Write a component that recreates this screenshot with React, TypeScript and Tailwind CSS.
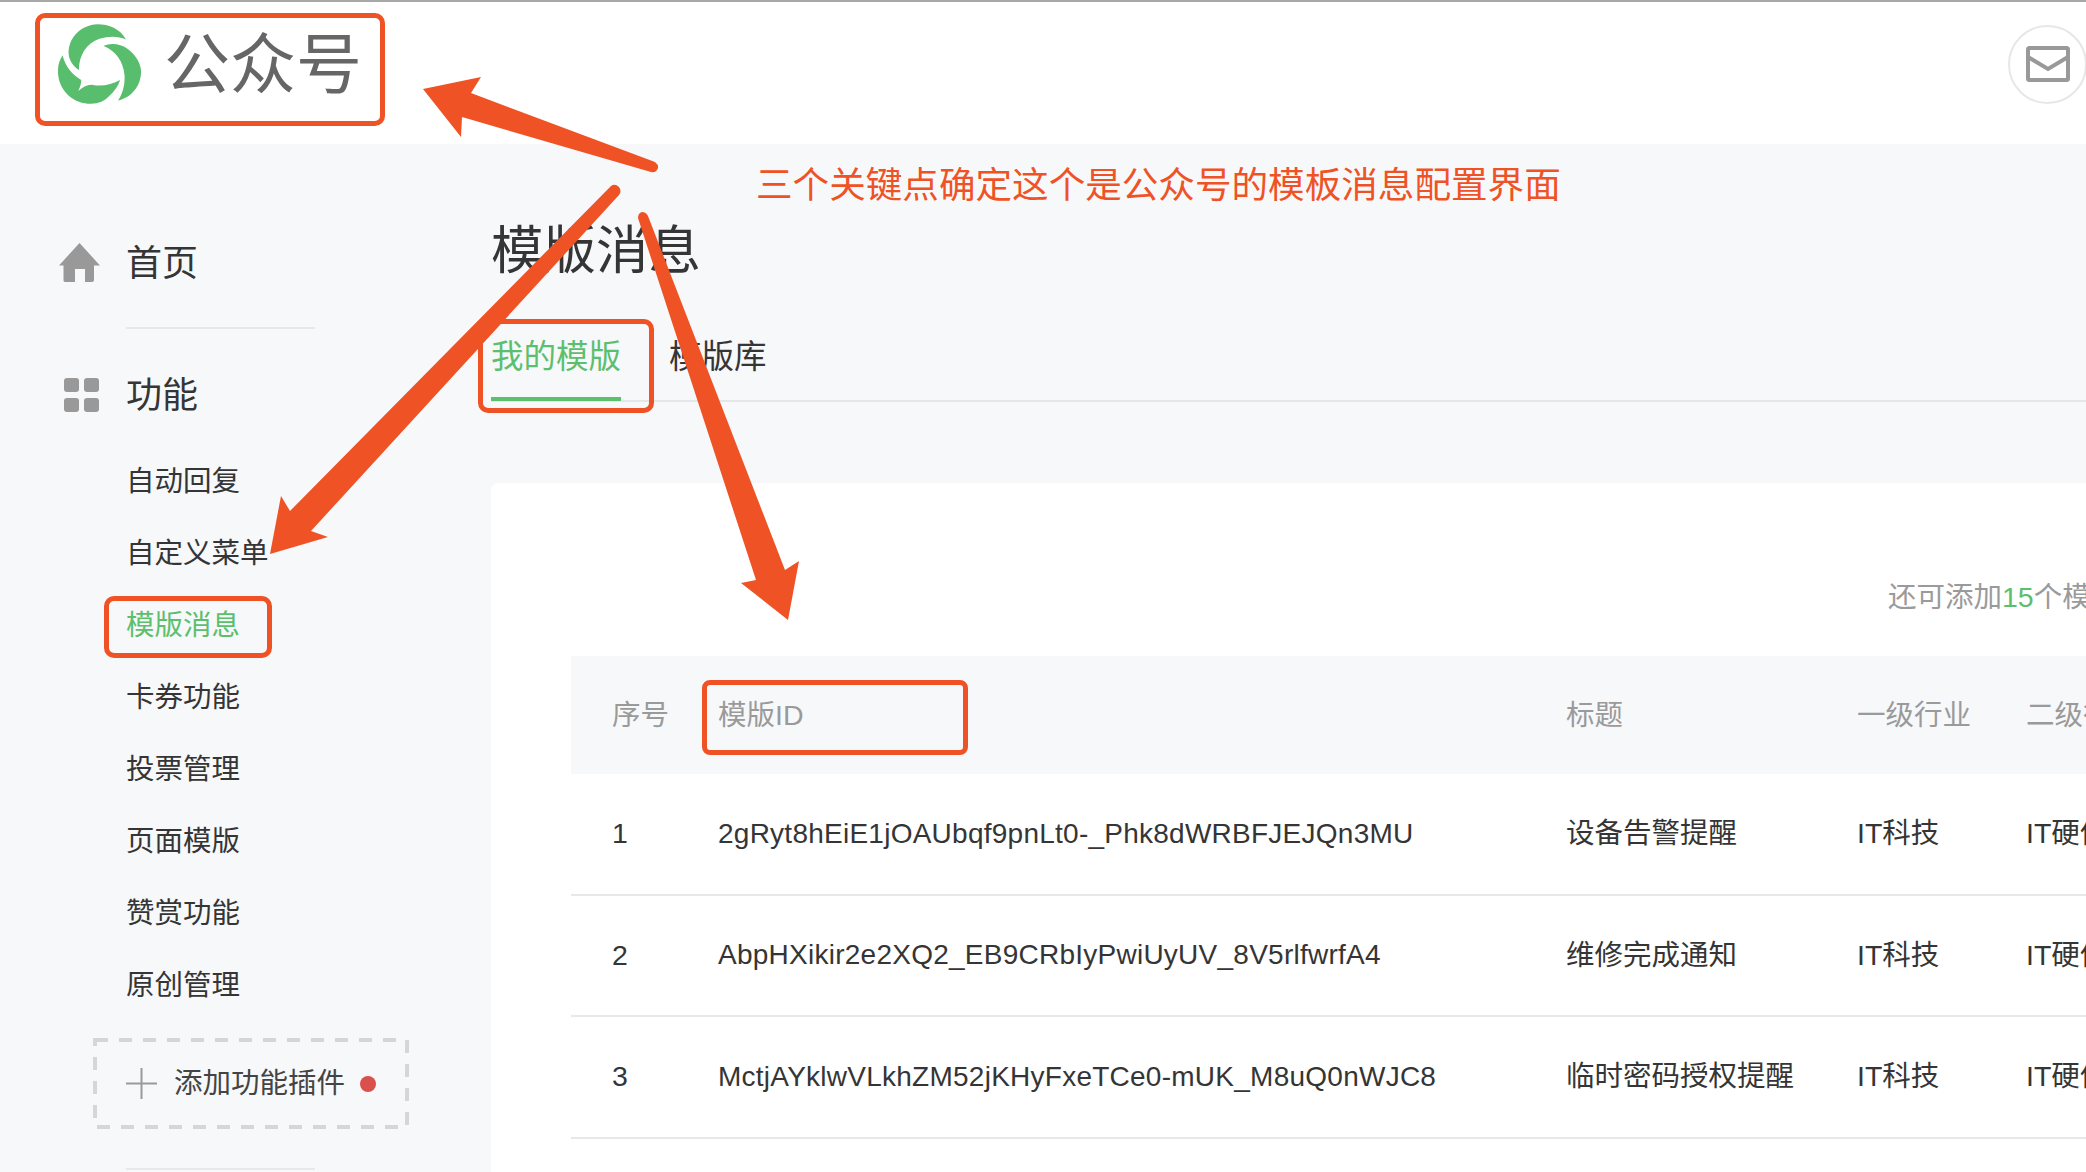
const fontStack = "[font-family:'Liberation_Sans','Noto_Sans_CJK_SC',sans-serif]"

const subItems = ["自动回复", "自定义菜单", "模版消息", "卡券功能", "投票管理", "页面模版", "赞赏功能", "原创管理"]

const rows = [
  { no: "1", id: "2gRyt8hEiE1jOAUbqf9pnLt0-_Phk8dWRBFJEJQn3MU", title: "设备告警提醒" },
  { no: "2", id: "AbpHXikir2e2XQ2_EB9CRbIyPwiUyUV_8V5rlfwrfA4", title: "维修完成通知" },
  { no: "3", id: "MctjAYklwVLkhZM52jKHyFxeTCe0-mUK_M8uQ0nWJC8", title: "临时密码授权提醒" },
]

function Logo() {
  return (
    <svg viewBox="83 42 250 240" className="w-[83px] h-[80px] shrink-0" fill="#58bd6c">
      <path d="M288 88C270 55 236 42 202 42C150 44 114 84 115 130C116 150 128 168 146 180C146 136 168 100 208 86C238 77 264 78 288 88Z" />
      <path d="M220 108C240 98 270 100 292 116C320 136 335 166 333 190C331 230 303 264 264 272C278 250 286 222 283 192C279 156 258 122 220 108Z" />
      <path d="M97 136C84 155 81 176 84 198C90 246 132 282 182 282C206 282 224 274 238 258C252 244 264 230 270 210C246 224 216 230 188 225C172 223 158 232 144 243C149 232 153 222 153 210C124 194 104 168 97 136Z" />
    </svg>
  )
}

function HomeIcon() {
  return (
    <svg viewBox="0 0 41 39" className="w-[41px] h-[39px]" fill="#999999">
      <path d="M20.5 0L41 22.5L35 22.5L35 37C35 38.2 34.2 39 33 39L26 39L26 26L16 26L16 39L6 39C5 39 4.5 38.2 4.5 37L4.5 22.5L0 22.5Z" />
    </svg>
  )
}

function GridIcon() {
  return (
    <svg viewBox="0 0 35 34" className="w-[35px] h-[34px]" fill="#999999">
      <rect x="0" y="0" width="15" height="14" rx="3" />
      <rect x="20" y="0" width="15" height="14" rx="3" />
      <rect x="0" y="20" width="15" height="14" rx="3" />
      <rect x="20" y="20" width="15" height="14" rx="3" />
    </svg>
  )
}

function MailIcon() {
  return (
    <svg viewBox="0 0 44 36" className="w-[44px] h-[36px]" fill="none" stroke="#999999" strokeWidth="4">
      <rect x="2" y="2" width="40" height="32" rx="1.5" />
      <path d="M2 11L22 23L42 11" />
    </svg>
  )
}

// red annotation arrows painted over the screenshot
function Arrows() {
  return (
    <svg viewBox="0 0 2086 1172" className="absolute inset-0 w-[2086px] h-[1172px] pointer-events-none" fill="#ef5325">
      <path d="M423 89L481 77L471 93L655 162Q660 166 657 170Q655 173 651 172L462 117L461 137Z" />
      <path d="M270 554L281 496L290 511L611 186Q615 183 619 187Q622 191 619 195L311 531L328 537Z" />
      <path d="M788 620L741 583L756 580L638 218Q638 213 642 212Q646 212 648 216L785 570L799 561Z" />
    </svg>
  )
}

export default function App() {
  return (
    <div className={`relative w-[2086px] h-[1172px] overflow-hidden bg-[#f7f8fa] text-[#353535] ${fontStack}`}>
      {/* Header */}
      <header className="h-[144px] bg-white border-t-2 border-[#a8a8a8] flex items-center justify-between pl-[58px]">
        <div className="flex items-center gap-[23px] -mt-[19px]">
          <Logo />
          <span className="text-[66px] leading-none text-[#666666] mt-[2px]">公众号</span>
        </div>
        <div className="w-[79px] h-[79px] -mr-[1px] rounded-full border-2 border-[#e7e7e7] flex items-center justify-center -mt-[18px] shrink-0">
          <MailIcon />
        </div>
      </header>

      <div className="flex">
        {/* Sidebar */}
        <aside className="w-[491px] shrink-0 pt-[84px]">
          <div className="h-[72px] flex items-center pl-[59px]">
            <div className="w-[67px] -mt-[4px]"><HomeIcon /></div>
            <span className="text-[36px]">首页</span>
          </div>
          <div className="ml-[126px] w-[189px] h-[2px] mt-[27px] bg-[#e7e8eb]" />
          <div className="h-[72px] flex items-center pl-[64px] mt-[31px]">
            <div className="w-[62px] -mt-[2px]"><GridIcon /></div>
            <span className="text-[36px]">功能</span>
          </div>
          <ul className="mt-[13px] pl-[126px]">
            {subItems.map((item) => (
              <li key={item} className={`h-[72px] flex items-center text-[28.5px] ${item === "模版消息" ? "text-[#5cbf6e]" : ""}`}>
                {item}
              </li>
            ))}
          </ul>
          <div className="relative ml-[93px] mt-[17px] w-[316px] h-[91px] flex items-center pl-[33px]">
            <svg viewBox="0 0 316 91" className="absolute inset-0 w-[316px] h-[91px]" fill="none" stroke="#d6d6d6" strokeWidth="4" strokeDasharray="13 11">
              <rect x="2" y="2" width="312" height="87" />
            </svg>
            <svg viewBox="0 0 31 31" className="w-[31px] h-[31px]" stroke="#9a9a9a" strokeWidth="2">
              <path d="M0 15.5H31M15.5 0V31" />
            </svg>
            <span className="ml-[17px] text-[28.5px] text-[#444444]">添加功能插件</span>
            <span className="ml-[15px] w-[16px] h-[16px] rounded-full bg-[#d9504c]" />
          </div>
          <div className="ml-[126px] w-[189px] h-[2px] mt-[39px] bg-[#e7e8eb]" />
        </aside>

        {/* Main */}
        <main className="flex-1 min-w-0 pt-[71px]">
          <h1 className="text-[52.5px] leading-[72px] text-[#353535]">模版消息</h1>
          <div className="h-[115px] flex items-stretch border-b-2 border-[#e4e6e9]">
            <div className="w-[130px] mt-[50px] mb-[-1px] text-[32.5px] leading-[40px] text-[#5cbf6e] border-b-4 border-[#5cbf6e]">我的模版</div>
            <div className="ml-[48px] mt-[50px] text-[32.5px] leading-[40px]">模版库</div>
          </div>

          <section className="mt-[81px] h-[800px] bg-white rounded-tl-lg pl-[80px] pt-[94px]">
            <p className="h-[40px] leading-[40px] pl-[1317px] whitespace-nowrap text-[28.5px] text-[#9a9a9a]">
              还可添加<span className="text-[#5cbf6e]">15</span>个模版
            </p>
            <div className="mt-[39px] w-[1600px] text-[28.5px]">
              <div className="h-[118px] bg-[#f7f8fa] text-[#9a9a9a] grid grid-cols-[106px_848px_291px_169px_1fr] items-center pl-[41px] whitespace-nowrap">
                <span>序号</span>
                <span>模版ID</span>
                <span>标题</span>
                <span>一级行业</span>
                <span>二级行业</span>
              </div>
              {rows.map((row) => (
                <div key={row.no} className="h-[121.5px] border-b-2 border-[#e7e8eb] grid grid-cols-[106px_848px_291px_169px_1fr] items-center pl-[41px] whitespace-nowrap">
                  <span>{row.no}</span>
                  <span className="text-[28px] tracking-[0.25px]">{row.id}</span>
                  <span>{row.title}</span>
                  <span>IT科技</span>
                  <span>IT硬件</span>
                </div>
              ))}
            </div>
          </section>
        </main>
      </div>

      {/* Annotations */}
      <div className="absolute left-[35px] top-[13px] w-[350px] h-[113px] border-[5px] border-[#ef5325] rounded-[10px]" />
      <div className="absolute left-[104px] top-[596px] w-[168px] h-[62px] border-[5px] border-[#ef5325] rounded-[10px]" />
      <div className="absolute left-[478px] top-[319px] w-[176px] h-[94px] border-[5px] border-[#ef5325] rounded-[10px]" />
      <div className="absolute left-[702px] top-[680px] w-[266px] h-[75px] border-[5px] border-[#ef5325] rounded-[8px]" />
      <Arrows />
      <p className="absolute left-[756px] top-[164px] text-[36.6px] leading-[44px] whitespace-nowrap text-[#ef5325]">
        三个关键点确定这个是公众号的模板消息配置界面
      </p>
    </div>
  )
}
